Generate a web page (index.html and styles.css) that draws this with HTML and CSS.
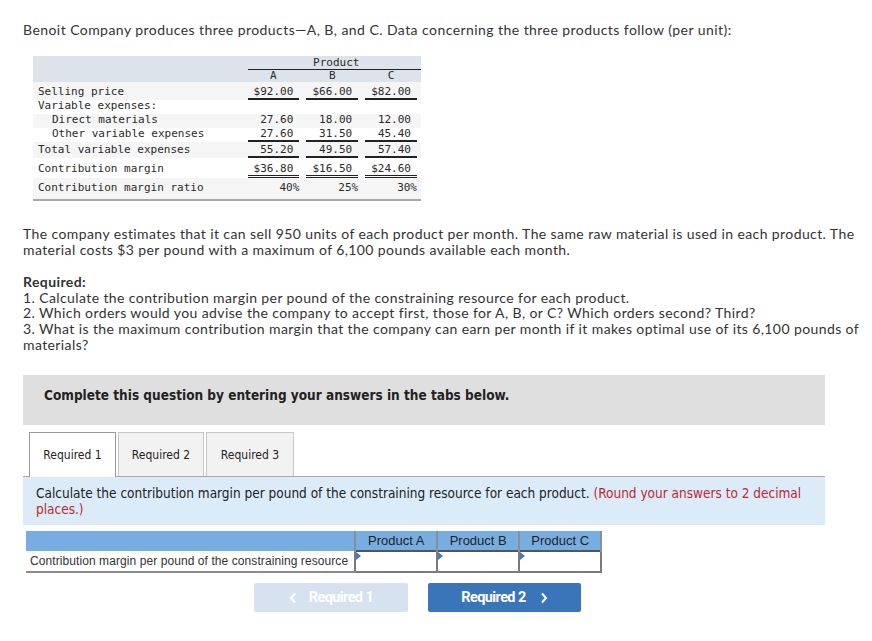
FILE: index.html
```html
<!DOCTYPE html>
<html lang="en">
<head>
<meta charset="utf-8">
<title>Benoit Company</title>
<link rel="stylesheet" href="styles.css">
</head>
<body>
<div class="page">
  <p class="intro">Benoit Company produces three products—A, B, and C. Data concerning the three products follow (per unit):</p>

  <table class="data">
    <thead>
      <tr class="h1"><th class="lbl"></th><th colspan="3"><span class="prod">Product</span></th></tr>
      <tr class="h2"><th class="lbl"></th><th class="n"><span class="c">A</span></th><th class="n"><span class="c">B</span></th><th class="n"><span class="c">C</span></th></tr>
    </thead>
    <tbody>
      <tr class="alt r-sell"><td class="lbl"><span class="t">Selling price</span></td><td class="n"><span class="t u">$92.00</span></td><td class="n"><span class="t u">$66.00</span></td><td class="n"><span class="t u">$82.00</span></td></tr>
      <tr class="r-var"><td class="lbl"><span class="t">Variable expenses:</span></td><td class="n"></td><td class="n"></td><td class="n"></td></tr>
      <tr class="alt r-dm"><td class="lbl"><span class="t ind">Direct materials</span></td><td class="n"><span class="t">27.60</span></td><td class="n"><span class="t">18.00</span></td><td class="n"><span class="t">12.00</span></td></tr>
      <tr class="r-oth"><td class="lbl"><span class="t ind">Other variable expenses</span></td><td class="n"><span class="t u">27.60</span></td><td class="n"><span class="t u">31.50</span></td><td class="n"><span class="t u">45.40</span></td></tr>
      <tr class="alt r-tot"><td class="lbl"><span class="t">Total variable expenses</span></td><td class="n"><span class="t u">55.20</span></td><td class="n"><span class="t u">49.50</span></td><td class="n"><span class="t u">57.40</span></td></tr>
      <tr class="r-cm"><td class="lbl"><span class="t dd">Contribution margin</span></td><td class="n"><span class="t dd du">$36.80</span></td><td class="n"><span class="t dd du">$16.50</span></td><td class="n"><span class="t dd du">$24.60</span></td></tr>
      <tr class="alt r-cmr"><td class="lbl"><span class="t">Contribution margin ratio</span></td><td class="n"><span class="t pct">40%</span></td><td class="n"><span class="t pct">25%</span></td><td class="n"><span class="t pct">30%</span></td></tr>
    </tbody>
  </table>

  <p class="para">The company estimates that it can sell 950 units of each product per month. The same raw material is used in each product. The material costs $3 per pound with a maximum of 6,100 pounds available each month.</p>

  <p class="req-title">Required:</p>
  <p class="req-list">1. Calculate the contribution margin per pound of the constraining resource for each product.<br>2. Which orders would you advise the company to accept first, those for A, B, or C? Which orders second? Third?<br>3. What is the maximum contribution margin that the company can earn per month if it makes optimal use of its 6,100 pounds of materials?</p>

  <div class="prompt">Complete this question by entering your answers in the tabs below.</div>

  <div class="tabs">
    <div class="tab active t1">Required 1</div>
    <div class="tab t2">Required 2</div>
    <div class="tab t3">Required 3</div>
  </div>

  <div class="info">Calculate the contribution margin per pound of the constraining resource for each product. <span class="red">(Round your answers to 2 decimal places.)</span></div>

  <table class="answer">
    <thead>
      <tr><th class="blank"></th><th>Product A</th><th>Product B</th><th>Product C</th></tr>
    </thead>
    <tbody>
      <tr><td class="alabel">Contribution margin per pound of the constraining resource</td><td class="inp"><span class="tri"></span></td><td class="inp"><span class="tri"></span></td><td class="inp"><span class="tri"></span></td></tr>
    </tbody>
  </table>

  <div class="nav">
    <div class="btn prev">
      <svg width="8" height="12" viewBox="0 0 8 12"><path d="M6 1.5 L2 6 L6 10.5" fill="none" stroke="#fff" stroke-width="2"/></svg>
      <span>Required 1</span>
    </div>
    <div class="btn next">
      <span>Required 2</span>
      <svg width="8" height="12" viewBox="0 0 8 12"><path d="M2 1.5 L6 6 L2 10.5" fill="none" stroke="#fff" stroke-width="2"/></svg>
    </div>
  </div>
</div>
</body>
</html>
```

FILE: styles.css
```css
html, body {
  margin: 0;
  padding: 0;
  background: #fff;
}

body {
  font-family: Lato, "Open Sans", sans-serif;
  color: #333;
}

.page {
  padding: 22px 0 20px 23px;
  width: 849px;
}

.intro {
  margin: 0;
  font-size: 14px;
  line-height: 16px;
  letter-spacing: 0.44px;
}

/* ---------- data table ---------- */
.data {
  margin: 18px 0 0 10px;
  border-collapse: collapse;
  width: 388px;
  font-family: "DejaVu Sans Mono", "Liberation Mono", monospace;
  font-size: 11px;
  color: #2a2a2a;
  border-bottom: 2px solid #a8a8a8;
}

.data th,
.data td {
  padding: 0;
  font-weight: normal;
}

.data thead tr {
  background: #dde3ea;
}

.data .lbl {
  width: 210px;
  text-align: left;
  padding-left: 5px;
}

.data .n {
  width: 52px;
  padding: 0 4px 0 3px;
}

.data .h1 th {
  height: 13px;
  vertical-align: top;
}

.data .prod {
  display: block;
  text-align: center;
  line-height: 12px;
  padding-top: 1px;
  border-bottom: 1px solid #222;
  margin-left: 3px;
  padding-left: 4px;
}

.data .h2 th {
  height: 12px;
  vertical-align: middle;
}

.data .c {
  display: block;
  text-align: center;
  line-height: 12px;
}

.data tbody td {
  vertical-align: bottom;
}

.data .alt {
  background: #f5f5f5;
}

.data .t {
  display: block;
  line-height: 12px;
  border-bottom: 2px solid transparent;
}

.data .n .t {
  text-align: right;
  padding-right: 6px;
}

.data .n .t.pct {
  padding-right: 0;
}

.data .ind {
  padding-left: 14px;
}

.data .u {
  border-bottom-color: #222;
}

.data .dd {
  border-bottom: 3px double transparent;
}

.data .du {
  border-bottom-color: #222;
}

.data .r-sell td { height: 18px; }
.data .r-var td { height: 14px; }
.data .r-dm td { height: 14px; }
.data .r-oth td { height: 14px; }
.data .r-tot td { height: 16px; }
.data .r-cm td { height: 20px; }
.data .r-cmr td { height: 18px; padding-bottom: 3px; }

/* ---------- text ---------- */
.para {
  margin: 25px 0 0;
  font-size: 14px;
  line-height: 15.5px;
  letter-spacing: 0.4px;
  width: 845px;
}

.req-title {
  margin: 17px 0 0;
  font-size: 14px;
  line-height: 15.5px;
  font-weight: bold;
  letter-spacing: 0.4px;
}

.req-list {
  margin: 0;
  font-size: 14px;
  line-height: 15.7px;
  letter-spacing: 0.4px;
  width: 845px;
}

/* ---------- prompt ---------- */
.prompt {
  margin-top: 23px;
  width: 802px;
  height: 50px;
  box-sizing: border-box;
  padding: 12px 0 0 21px;
  background: #dfdfdf;
  font-family: "DejaVu Sans Condensed", "DejaVu Sans", sans-serif;
  font-weight: bold;
  font-size: 13.5px;
  line-height: 16px;
  color: #222;
}

/* ---------- tabs ---------- */
.tabs {
  margin-top: 7px;
  width: 802px;
  display: flex;
  gap: 2px;
  padding-left: 6px;
  box-sizing: border-box;
  border-bottom: 1px solid #a9a9a9;
  height: 45px;
  align-items: flex-end;
}

.tab {
  height: 44px;
  box-sizing: border-box;
  border: 1px solid #c8c8c8;
  border-bottom: none;
  background: #f2f2f2;
  display: flex;
  align-items: center;
  justify-content: center;
  font-family: "DejaVu Sans Condensed", "DejaVu Sans", sans-serif;
  font-size: 12px;
  color: #222;
}

.tab.active {
  background: #fff;
  border-color: #999;
  height: 45px;
  margin-bottom: -1px;
  padding-bottom: 1px;
}

.t1 { width: 87px; }
.t2 { width: 86px; }
.t3 { width: 88px; }

/* ---------- info ---------- */
.info {
  width: 802px;
  box-sizing: border-box;
  padding: 8px 13px 8px;
  background: #dcebf8;
  font-family: "DejaVu Sans Condensed", "DejaVu Sans", sans-serif;
  font-size: 13.5px;
  line-height: 16px;
  color: #222;
}

.red {
  color: #c1272d;
}

/* ---------- answer table ---------- */
.answer {
  margin: 6px 0 0 3px;
  border-collapse: collapse;
  font-family: "Liberation Sans", Arial, sans-serif;
  font-size: 12px;
  color: #333;
}

.answer th {
  background: #78ade2;
  height: 19px;
  padding: 0;
  font-weight: normal;
  font-size: 13px;
  color: #1f1f1f;
  width: 80px;
  border-left: 2px solid #8a8f96;
  border-right: 2px solid #8a8f96;
  text-align: center;
}

.answer th.blank {
  width: 328px;
  border-left: none;
}

.answer td {
  height: 19px;
  padding: 0;
  border-bottom: 2px solid #8a8a8a;
}

.answer .alabel {
  padding-left: 4px;
  padding-right: 6px;
  text-align: left;
  white-space: nowrap;
  letter-spacing: 0.08px;
}

.answer .inp {
  position: relative;
  background: #fff;
  border: 2px solid #7b7b7b;
  border-top: 2px solid #555;
}

.tri {
  position: absolute;
  left: 0;
  top: 0;
  width: 0;
  height: 0;
  border-top: 4px solid transparent;
  border-bottom: 4px solid transparent;
  border-left: 5px solid #3b7bc4;
}

/* ---------- nav ---------- */
.nav {
  margin: 10px 0 0 231px;
  display: flex;
  gap: 20px;
}

.btn {
  height: 29px;
  border-radius: 2px;
  display: flex;
  align-items: center;
  justify-content: center;
  gap: 12px;
  font-family: Roboto, "Liberation Sans", sans-serif;
  font-weight: bold;
  font-size: 14.5px;
  letter-spacing: -0.6px;
  color: #fff;
}

.prev {
  width: 154px;
  background: #d6e2ef;
}

.next {
  width: 153px;
  background: #3a75ba;
  gap: 14px;
}
```
